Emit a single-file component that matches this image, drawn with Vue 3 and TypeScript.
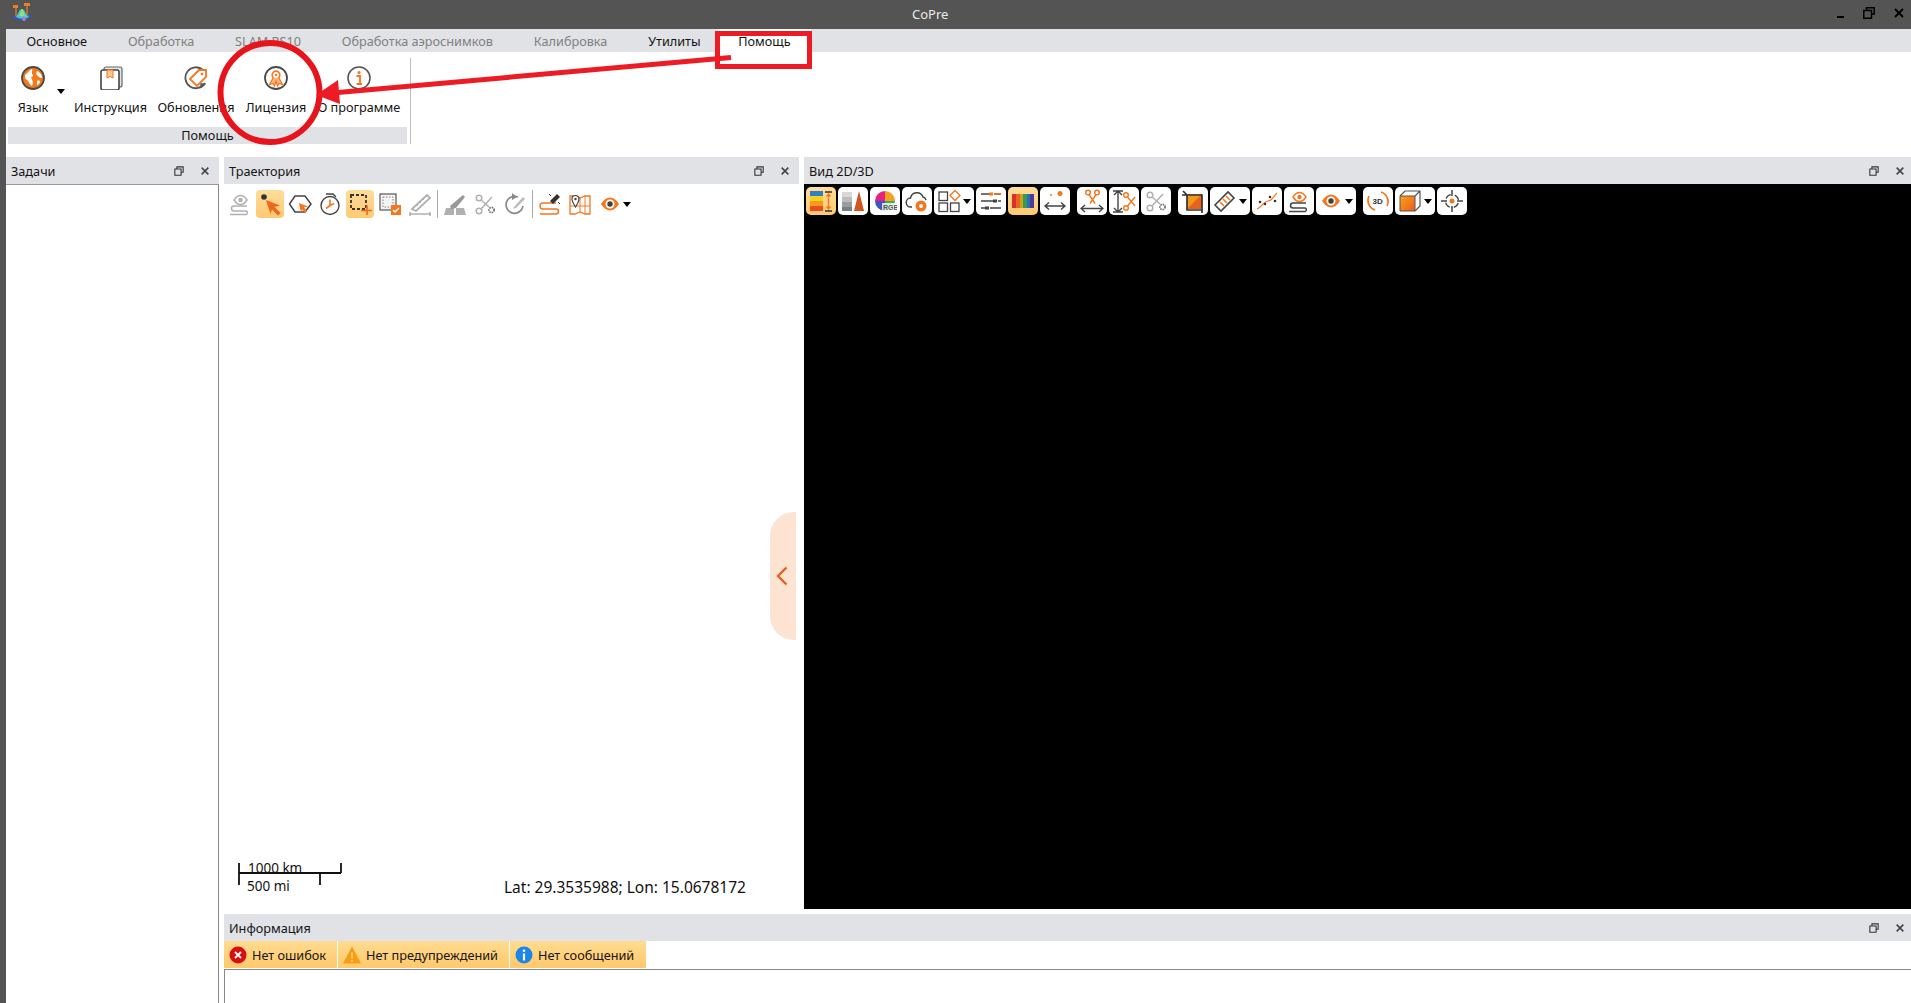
<script setup lang="ts">
const O = '#f4761d'
const D = '#444'
const G = '#b0b0b0'
const eyeSnake = (c: string, e: string) =>
  `<path d="M6 8c2-3 4-4.500 6.500-4.500S17 5 19 8c-2 3-4 4.500-6.500 4.500S8 11 6 8z" fill="none" stroke="${e}" stroke-width="1.500"/><circle cx="12.500" cy="8" r="2.200" fill="${e}"/><path d="M19 14H6a2.500 2.500 0 0 0 0 5h12a1.800 1.800 0 0 1 0 3.500H2" fill="none" stroke="${c}" stroke-width="1.500"/>`
const scissorsGear = (c: string) =>
  `<circle cx="6" cy="6" r="2.800" fill="none" stroke="${c}" stroke-width="1.500"/><circle cx="6" cy="19" r="2.800" fill="none" stroke="${c}" stroke-width="1.500"/><path d="M8 8l8 7M8 17L19 5" stroke="${c}" stroke-width="1.500" fill="none"/><circle cx="18.500" cy="18" r="2.600" fill="none" stroke="#777" stroke-width="1.800" stroke-dasharray="1.600 .8"/>`
const eye = `<path d="M3 12c3-4.500 6-6.500 9-6.500s6 2 9 6.500c-3 4.500-6 6.500-9 6.500S6 16.500 3 12z" fill="${O}"/><circle cx="12" cy="12" r="4.500" fill="#fff"/><circle cx="12" cy="12" r="2.700" fill="#4a3a30"/>`

const traj: { svg: string; on?: boolean; sepBefore?: boolean; caret?: boolean }[] = [
  { svg: eyeSnake(G, G) },
  { on: true, svg: `<circle cx="6" cy="5" r="2.800" fill="#333"/><path d="M8 8l14 5.500-5.500 1.500 6 6-2.500 2.500-6-6L12.500 22z" fill="#f0661a"/>` },
  { svg: `<path d="M7 4h10l6 8-6 8H7L1.500 12z" fill="none" stroke="${D}" stroke-width="1.500"/><path d="M11 11l9 3.500-4 1 3 3.500-2 2-3-3.500-1 3.500z" fill="${O}"/>` },
  { svg: `<circle cx="12" cy="13.500" r="9" fill="none" stroke="${D}" stroke-width="1.400"/><path d="M12 7.500v6l-4 3M12 13.500l4-2" stroke="${O}" stroke-width="1.600" fill="none"/><path d="M8 2h7l3 3" stroke="${D}" stroke-width="1.400" fill="none"/>` },
  { on: true, svg: `<path d="M3 3h15v14H3z" fill="none" stroke="#333" stroke-width="1.800" stroke-dasharray="3 2"/><path d="M19 13v10M13 18.500h11" stroke="#f0661a" stroke-width="1.500"/>` },
  { svg: `<rect x="2" y="2" width="16" height="16" fill="#f3f3f3" stroke="#555" stroke-width="1.200"/><rect x="5" y="5" width="10" height="10" fill="none" stroke="#888" stroke-dasharray="1.500 1.500"/><rect x="13" y="13" width="10" height="10" fill="${O}"/><path d="M15 18l2 2 4-4" stroke="#fff" stroke-width="1.300" fill="none"/>` },
  { svg: `<path d="M4 17L19 3l3 3L8 19z" fill="none" stroke="${G}" stroke-width="1.800"/><path d="M10 14l-2-2M13 11l-2-2M16 8l-2-2" stroke="${G}"/><path d="M1 22h22M2 20v4M22 20v4" stroke="${G}" stroke-width="1.500"/>` },
  { sepBefore: true, svg: `<path d="M1 23l2-7h8v7zM13 23v-7h8l2 7z" fill="${G}"/><path d="M7 14L20 3l2 2-9 11-5 1z" fill="#999"/>` },
  { svg: scissorsGear(G) },
  { svg: `<path d="M20 14a8.500 8.500 0 1 1-5-9" fill="none" stroke="#888" stroke-width="1.700"/><path d="M11 15l9-10 2 2-9 9-3 1z" fill="#bbb"/><path d="M9 1l5 4-5 3z" fill="#888"/>` },
  { sepBefore: true, svg: `<path d="M18 8H5a2.500 2.500 0 0 0 0 6h13a2.500 2.500 0 0 1 0 5H2" transform="translate(0 3)" fill="none" stroke="${O}" stroke-width="1.500"/><path d="M12 9l7-7 3 3-7 7z" fill="#333"/><path d="M11 2l2 2M20 10l2 2" stroke="#333"/>` },
  { svg: `<path d="M2 4h6l4 2 5-2h5v18h-5l-5-2-5 2H2z" fill="#fff" stroke="${O}" stroke-width="1.300"/><path d="M2 14h20M12 6v14M17 4v18" stroke="${O}" stroke-width="1"/><path d="M7.500 15C5 11 4 9.500 4 7a3.500 3.500 0 0 1 7 0c0 2.500-1 4-3.500 8z" fill="#fff" stroke="#444" stroke-width="1.200"/><circle cx="7.500" cy="7" r="1.200" fill="#444"/>` },
  { caret: true, svg: eye },
]

const view: { svg: string; on?: boolean; caret?: boolean; gap?: boolean }[] = [
  { on: true, svg: `<rect x="1" y="2" width="13" height="5" fill="#2f80c8"/><rect x="1" y="7" width="13" height="5" fill="#f4d31f"/><rect x="1" y="12" width="13" height="5" fill="#f59a1f"/><rect x="1" y="17" width="13" height="5" fill="#ec4a1f"/><path d="M16 3h7M16 22h7" stroke="#333" stroke-width="1.500"/><path d="M19.500 5v15M17.500 7.500l2-2.500 2 2.500M17.500 17.500l2 2.500 2-2.500" stroke="${O}" stroke-width="1.300" fill="none"/>` },
  { svg: `<rect x="1" y="3" width="10" height="5" fill="#d8d8d8"/><rect x="1" y="8" width="10" height="5" fill="#bdbdbd"/><rect x="1" y="13" width="10" height="5" fill="#9c9c9c"/><rect x="1" y="18" width="10" height="4" fill="#7d7d7d"/><path d="M18 2l5 20H13z" fill="#d1551f"/>` },
  { svg: `<path d="M12 2a10 10 0 0 1 10 10H12z" fill="#f4a11d"/><path d="M12 2a10 10 0 0 0-10 10h10z" fill="#e8217f"/><path d="M2 12a10 10 0 0 0 10 10V12z" fill="#3a57c6"/><path d="M12 12h10a10 10 0 0 1-10 10z" fill="#3fae5a"/><rect x="9" y="14" width="15" height="8" fill="#fff" opacity=".8"/><text x="10" y="21" font-family="Liberation Sans" font-size="7" font-weight="700" fill="#555">RGB</text>` },
  { svg: `<path d="M7 18H6a4.500 4.500 0 0 1-.500-9A6.500 6.500 0 0 1 18 8a4 4 0 0 1 3 3" fill="none" stroke="${D}" stroke-width="1.500"/><circle cx="16" cy="17" r="5.500" fill="${O}"/><circle cx="16" cy="17" r="2" fill="#fff"/>` },
  { caret: true, svg: `<rect x="2" y="3" width="8.500" height="8.500" fill="none" stroke="${D}" stroke-width="1.300"/><rect x="2" y="14" width="8.500" height="8.500" fill="none" stroke="${D}" stroke-width="1.300"/><rect x="13.500" y="14" width="8.500" height="8.500" fill="none" stroke="${D}" stroke-width="1.300"/><path d="M18 1.500l5 5-5 5-5-5z" fill="none" stroke="${O}" stroke-width="1.300"/>` },
  { svg: `<path d="M2 5h8M15 5h7M2 12h12M19 12h3M2 19h4M11 19h11" stroke="${D}" stroke-width="1.500"/><rect x="10" y="3.500" width="4" height="3" fill="${O}"/><rect x="14" y="10.500" width="4" height="3" fill="${D}"/><rect x="6" y="17.500" width="4" height="3" fill="${D}"/><path d="M15 5h7" stroke="${O}" stroke-width="1.500"/>` },
  { on: true, svg: `<rect x="1" y="5" width="4" height="14" fill="#d8302a"/><rect x="5" y="5" width="4" height="14" fill="#e8651f"/><rect x="9" y="5" width="3" height="14" fill="#c9a21c"/><rect x="12" y="5" width="4" height="14" fill="#3a9a55"/><rect x="16" y="5" width="3" height="14" fill="#2a6fb8"/><rect x="19" y="5" width="4" height="14" fill="#4a3aa0"/>` },
  { svg: `<circle cx="8" cy="6" r="1" fill="${O}"/><circle cx="17" cy="4.500" r="2.500" fill="${O}"/><path d="M2 17h20M6 13.500L2 17l4 3.500M18 13.500l4 3.500-4 3.500" stroke="${D}" stroke-width="1.400" fill="none"/>` },
  { gap: true, svg: `<circle cx="8" cy="3.500" r="2.300" fill="none" stroke="${O}" stroke-width="1.400"/><circle cx="17" cy="3.500" r="2.300" fill="none" stroke="${O}" stroke-width="1.400"/><path d="M9 5.500l6 9M16 5.500l-6 9" stroke="${O}" stroke-width="1.400"/><path d="M1 19.500h22M5 16l-4 3.500L5 23M19 16l4 3.500-4 3.500" stroke="${D}" stroke-width="1.400" fill="none"/>` },
  { svg: `<path d="M6 2v21M2 6l4-4 4 4M2 19l4 4 4-4M1 2h10M1 23h10" stroke="${D}" stroke-width="1.400" fill="none"/><circle cx="14" cy="6" r="2.300" fill="none" stroke="${O}" stroke-width="1.400"/><circle cx="14" cy="19" r="2.300" fill="none" stroke="${O}" stroke-width="1.400"/><path d="M15.500 8L23 17M15.500 17L23 8" stroke="${O}" stroke-width="1.400"/>` },
  { svg: scissorsGear(G) },
  { gap: true, svg: `<path d="M6 5h15v15H6z" fill="#e8641e"/><path d="M6 5h15L6 20z" fill="#f4971d"/><path d="M2 2l4 4v15h15M1 6h20v15M21 21v3" fill="none" stroke="#333" stroke-width="1.700"/>` },
  { caret: true, svg: `<path d="M2 16L15 3l6 6L8 22z" fill="#fff" stroke="#444" stroke-width="1.600"/><path d="M7 13l4 4M10 10l4 4M13 7l4 4" stroke="${O}" stroke-width="1.600"/>` },
  { svg: `<path d="M2 20c5-2 7-8 11-8s5-4 9-8" fill="none" stroke="${O}" stroke-width="1.200"/><circle cx="5" cy="13" r="1.300" fill="#333"/><circle cx="10" cy="15" r="1.300" fill="#333"/><circle cx="15" cy="8" r="1.300" fill="#333"/><circle cx="20" cy="12" r="1.300" fill="#333"/>` },
  { svg: eyeSnake(D, O) },
  { caret: true, svg: eye },
  { gap: true, svg: `<text x="6.500" y="15" font-family="Liberation Sans" font-size="8" font-weight="700" fill="#333">3D</text><path d="M15 3a10 10 0 0 1 6 14" fill="none" stroke="${O}" stroke-width="1.600"/><path d="M9 21a10 10 0 0 1-6-14" fill="none" stroke="${O}" stroke-width="1.600"/>` },
  { caret: true, svg: `<defs><linearGradient id="cg" x1="0" y1="0" x2="1" y2="1"><stop offset="0" stop-color="#fca31c"/><stop offset="1" stop-color="#ea5d18"/></linearGradient></defs><path d="M2 7h15v15H2z" fill="url(#cg)" stroke="#555"/><path d="M2 7l5-5h15v15l-5 5M17 7l5-5" fill="none" stroke="#555" stroke-width="1.200"/>` },
  { svg: `<circle cx="12" cy="12" r="6.500" fill="none" stroke="${D}" stroke-width="1.300" stroke-dasharray="6 4.200" stroke-dashoffset="-2.100"/><circle cx="12" cy="12" r="2.500" fill="${O}"/><path d="M12 1v6M12 17v6M1 12h6M17 12h6" stroke="${D}" stroke-width="1.500"/>` },
]

const ribbon = [
  { label: 'Язык', cls: 'lang', svg: `<circle cx="12" cy="12" r="11" fill="#f47a1c" stroke="#4a4a4a" stroke-width="1.800"/><path d="M4 9c3-2 4-5 7-6 1 2-1 3 0 5 2 1 1 3-1 3 1 3 3 5 1 9-3-2-3-5-5-6-2-1-2-3-2-5zM16 5c3 1 5 4 5 7-2 0-3-1-4-2-2-1-2-3-1-5zM16 15c2-1 3 0 3 1-1 2-2 3-3 3z" fill="#fff"/>` },
  { label: 'Инструкция', cls: 'doc', svg: `<rect x="5" y="1" width="18" height="20" rx="2" fill="#e6e6e6" stroke="#666" stroke-width="1.200"/><rect x="2" y="4" width="18" height="20" rx="2" fill="#fff" stroke="#444" stroke-width="1.600"/><path d="M8 4h6v8l-3-1.500L8 12z" fill="#fbc78e" stroke="${O}"/>` },
  { label: 'Обновления', cls: 'upd', svg: `<path d="M21 17A10.500 10.500 0 1 1 19 4" fill="none" stroke="#555" stroke-width="1.800"/><path d="M17 22l5-4-6-1z" fill="#555"/><path d="M6 13L15 4h7v7l-9 9z" fill="#fff" stroke="${O}" stroke-width="1.800"/><circle cx="18" cy="8" r="1.300" fill="${O}"/>` },
  { label: 'Лицензия', cls: 'lic', svg: `<circle cx="12" cy="12" r="11" fill="#fff" stroke="#4a4a4a" stroke-width="1.800"/><circle cx="12" cy="9" r="3.800" fill="none" stroke="${O}" stroke-width="1.700"/><circle cx="12" cy="9" r="1.200" fill="${O}"/><path d="M9 12l-3.500 6.500 3.500-1 1.500 2.500L12 15l1.500 5 1.500-2.500 3.500 1L15 12" fill="#fbb57b" stroke="${O}" stroke-width="1.200"/>` },
  { label: 'О программе', cls: 'about', svg: `<circle cx="12" cy="12" r="11" fill="#fff" stroke="#555" stroke-width="1.600"/><circle cx="12" cy="6.500" r="1.500" fill="${O}"/><path d="M9.500 10h3.500v8h2M9.500 18H15" fill="none" stroke="${O}" stroke-width="1.800"/>` },
]

const tabs = [
  { label: 'Основное' },
  { label: 'Обработка', off: true },
  { label: 'SLAM RS10', off: true },
  { label: 'Обработка аэроснимков', off: true },
  { label: 'Калибровка', off: true },
  { label: 'Утилиты' },
  { label: 'Помощь', active: true },
]
</script>

<template>
  <div class="app">
    <header class="title">
      <svg class="logo" viewBox="0 0 22 20" width="22" height="20">
        <path d="M1 15l9-4 11 3-9 5z" fill="#2f55e8" />
        <path d="M5 15c2-2 3-8 6-8s3 5 7 8c-4 2-9 2-13 0z" fill="#4cc9c0" />
        <path d="M8 14c1-2 2-7 3-7s2 4 3 7z" fill="#8fe07a" />
        <circle cx="13" cy="17" r="2" fill="#b56fe0" />
        <path d="M5 5v9M16 4v9" stroke="#e8802a" stroke-width="1.200" />
        <rect x="2" y="3" width="5" height="3" fill="#e8802a" />
        <rect x="13" y="1" width="6" height="3" fill="#e8802a" />
      </svg>
      <span class="title-text">CoPre</span>
      <div class="win-btns">
        <i class="min"></i>
        <svg viewBox="0 0 12 12" width="12" height="12"><path d="M3.500 3V.8h7.700V7H9M.8 3.500h7.700v7.700H.8z" fill="none" stroke="#000" stroke-width="1.500" /></svg>
        <svg viewBox="0 0 12 12" width="12" height="12"><path d="M2 2l8 8M10 2l-8 8" stroke="#000" stroke-width="1.900" /></svg>
      </div>
    </header>

    <div class="main">
      <nav class="tabs">
        <span v-for="t in tabs" :key="t.label" class="tab" :class="{ off: t.off, active: t.active }">{{ t.label }}</span>
      </nav>

      <section class="ribbon">
        <div class="group">
          <div class="group-btns">
            <div v-for="b in ribbon" :key="b.label" class="rbtn" :class="b.cls">
              <svg viewBox="0 0 24 24" width="24" height="24" v-html="b.svg"></svg>
              <span>{{ b.label }}</span>
              <i v-if="b.cls === 'lang'" class="caret lang-caret"></i>
            </div>
          </div>
          <div class="group-label">Помощь</div>
        </div>
        <div class="group-sep"></div>
      </section>

      <div class="workspace">
        <aside class="panel tasks">
          <div class="phead">
            <span>Задачи</span>
            <svg class="pbtn first" viewBox="0 0 12 12" width="10" height="10"><path d="M3.500 3V1h7.500v6.500H9M1 3.500h7.500V11H1z" fill="none" stroke="#333" stroke-width="1.300" /></svg>
            <svg class="pbtn" viewBox="0 0 12 12" width="10" height="10"><path d="M2 2l8 8M10 2l-8 8" stroke="#444" stroke-width="1.900" /></svg>
          </div>
          <div class="tasks-body"></div>
        </aside>

        <div class="right">
          <div class="top">
            <section class="panel traj">
              <div class="phead">
                <span>Траектория</span>
                <svg class="pbtn first" viewBox="0 0 12 12" width="10" height="10"><path d="M3.500 3V1h7.500v6.500H9M1 3.500h7.500V11H1z" fill="none" stroke="#333" stroke-width="1.300" /></svg>
                <svg class="pbtn" viewBox="0 0 12 12" width="10" height="10"><path d="M2 2l8 8M10 2l-8 8" stroke="#444" stroke-width="1.900" /></svg>
              </div>
              <div class="map">
                <div class="ttool">
                  <template v-for="(b, i) in traj" :key="i">
                    <i v-if="b.sepBefore" class="tsep"></i>
                    <div class="tbtn" :class="{ on: b.on, wide: b.caret }">
                      <svg viewBox="0 0 24 24" width="24" height="24" v-html="b.svg"></svg>
                      <i v-if="b.caret" class="caret"></i>
                    </div>
                  </template>
                </div>
                <svg class="scale" viewBox="0 0 104 24" width="104" height="24">
                  <path d="M1 0v22M1 10h102M103 0v10M82 10v12" stroke="#111" stroke-width="1.800" fill="none" />
                </svg>
                <span class="scale-label km">1000 km</span>
                <span class="scale-label mi">500 mi</span>
                <div class="coords">Lat: 29.3535988; Lon: 15.0678172</div>
                <div class="handle">
                  <svg viewBox="0 0 12 20" width="12" height="20"><path d="M10.500 1.500L2 10l8.500 8.500" fill="none" stroke="#f05a14" stroke-width="2.300" /></svg>
                </div>
              </div>
            </section>

            <section class="panel vw edge">
              <div class="phead">
                <span>Вид 2D/3D</span>
                <svg class="pbtn first" viewBox="0 0 12 12" width="10" height="10"><path d="M3.500 3V1h7.500v6.500H9M1 3.500h7.500V11H1z" fill="none" stroke="#333" stroke-width="1.300" /></svg>
                <svg class="pbtn" viewBox="0 0 12 12" width="10" height="10"><path d="M2 2l8 8M10 2l-8 8" stroke="#444" stroke-width="1.900" /></svg>
              </div>
              <div class="canvas">
                <div class="vtool">
                  <div v-for="(b, i) in view" :key="i" class="vbtn" :class="{ on: b.on, wide: b.caret, gap: b.gap }">
                    <svg viewBox="0 0 24 24" width="24" height="24" v-html="b.svg"></svg>
                    <i v-if="b.caret" class="caret"></i>
                  </div>
                </div>
              </div>
            </section>
          </div>

          <section class="panel info edge">
            <div class="phead">
              <span>Информация</span>
              <svg class="pbtn first" viewBox="0 0 12 12" width="10" height="10"><path d="M3.500 3V1h7.500v6.500H9M1 3.500h7.500V11H1z" fill="none" stroke="#333" stroke-width="1.300" /></svg>
              <svg class="pbtn" viewBox="0 0 12 12" width="10" height="10"><path d="M2 2l8 8M10 2l-8 8" stroke="#444" stroke-width="1.900" /></svg>
            </div>
            <div class="msgbar">
              <div class="msg m1">
                <svg viewBox="0 0 18 18" width="18" height="18"><circle cx="9" cy="9" r="8.500" fill="#d90f0f" /><path d="M6 6l6 6M12 6l-6 6" stroke="#fff" stroke-width="1.800" /></svg>
                <span>Нет ошибок</span>
              </div>
              <div class="msg m2">
                <svg viewBox="0 0 18 18" width="18" height="18"><path d="M9 .5L18 17.500H0z" fill="#f99c0d" /><path d="M9 6.500v6" stroke="#fdd28a" stroke-width="1.800" /><circle cx="9" cy="15" r="1" fill="#fdd28a" /></svg>
                <span>Нет предупреждений</span>
              </div>
              <div class="msg m3">
                <svg viewBox="0 0 18 18" width="18" height="18"><circle cx="9" cy="9" r="8.500" fill="#1b86e6" /><circle cx="9" cy="4.700" r="1.300" fill="#fff" /><path d="M9 7.500v7" stroke="#fff" stroke-width="2.200" /></svg>
                <span>Нет сообщений</span>
              </div>
            </div>
            <div class="msgbox"></div>
          </section>
        </div>
      </div>
    </div>

    <svg class="annot" viewBox="0 0 1911 1003" width="1911" height="1003">
      <ellipse cx="270" cy="92.500" rx="49.500" ry="49.500" fill="none" stroke="#e8141c" stroke-width="6" />
      <rect x="717.500" y="33.500" width="92" height="33" fill="none" stroke="#ed1c24" stroke-width="5" />
      <path d="M731 57.500L338 92.500" stroke="#ed1c24" stroke-width="5" fill="none" />
      <path d="M316 95L338 80 340 104z" fill="#ed1c24" />
    </svg>
  </div>
</template>

<style>
html, body { margin: 0; padding: 0; background: #545454; }
</style>

<style scoped>
.app {
  position: relative;
  width: 1911px;
  height: 1003px;
  overflow: hidden;
  display: flex;
  flex-direction: column;
  background: #545454;
  font-family: "Noto Sans", "Open Sans", sans-serif;
  font-size: 12.7px;
  color: #141414;
}
.title {
  position: relative;
  flex: 0 0 29px;
  display: flex;
  align-items: center;
  padding-left: 11px;
  padding-right: 6px;
  color: #eaeaea;
}
.logo { flex: none; margin-top: -5px; }
.title-text {
  position: absolute;
  left: 912px;
  top: 5px;
  font-size: 13px;
}
.win-btns {
  margin-left: auto;
  display: flex;
  align-items: center;
  gap: 18px;
  margin-top: -3px;
}
.min {
  display: block;
  width: 7px;
  height: 2px;
  margin-top: 7px;
  margin-right: 1px;
  background: #000;
}
.main {
  flex: 1;
  margin-left: 6px;
  min-height: 0;
  background: #fff;
  display: flex;
  flex-direction: column;
}
.tabs {
  flex: 0 0 23px;
  display: flex;
  background: #e1e2e6;
}
.tab {
  padding: 1px 20.400px 0;
  line-height: 22px;
  white-space: nowrap;
}
.tab:nth-child(6) { padding-right: 17.500px; }
.tab.off { color: #808080; }
.tab.active { background: #fff; padding: 2px 20px 0; line-height: 21px; }
.ribbon {
  flex: 0 0 105px;
  display: flex;
  padding: 6px 0 13px 2px;
  box-sizing: border-box;
}
.group {
  width: 399px;
  display: flex;
  flex-direction: column;
}
.group-btns {
  flex: 1;
  display: flex;
}
.rbtn {
  position: relative;
  display: flex;
  flex-direction: column;
  align-items: center;
  padding-top: 8px;
  box-sizing: border-box;
  gap: 8px;
  white-space: nowrap;
}
.rbtn span { line-height: 18px; }
.lang { width: 62px; padding-right: 12px; }
.doc { width: 81px; }
.upd { width: 90px; }
.lic { width: 70px; }
.about { width: 96px; }
.lang-caret { position: absolute; left: 49px; top: 31px; }
.group-label {
  flex: 0 0 17px;
  background: #e1e2e6;
  text-align: center;
  line-height: 16px;
}
.group-sep {
  width: 1px;
  margin-left: 3px;
  background: #bdbdbd;
}
.caret {
  display: block;
  width: 0;
  height: 0;
  border-left: 4.500px solid transparent;
  border-right: 4.500px solid transparent;
  border-top: 5px solid #000;
  flex: none;
}
.workspace {
  flex: 1;
  min-height: 0;
  display: flex;
}
.panel {
  display: flex;
  flex-direction: column;
}
.phead {
  flex: 0 0 27px;
  display: flex;
  align-items: center;
  padding-left: 5px;
  background: #e1e2e6;
}
.pbtn { flex: none; margin-right: 9px; }
.pbtn.first { margin-left: auto; margin-right: 16px; }
.edge .pbtn { margin-right: 6px; }
.edge .pbtn.first { margin-right: 16px; }
.tasks { width: 213px; flex: none; }
.tasks-body {
  flex: 1;
  border-top: 1px solid #999;
  border-right: 1px solid #888;
}
.right {
  flex: 1;
  min-width: 0;
  margin-left: 5px;
  display: flex;
  flex-direction: column;
  gap: 5px;
}
.top {
  flex: 0 0 752px;
  display: flex;
  gap: 5px;
}
.traj { width: 575px; flex: none; }
.map {
  position: relative;
  flex: 1;
  background: #fff;
}
.ttool {
  display: flex;
  gap: 2px;
  padding: 6px 0 0 2px;
}
.tbtn {
  width: 28px;
  height: 28px;
  border-radius: 4px;
  display: flex;
  align-items: center;
  justify-content: center;
  flex: none;
}
.tbtn.wide { width: 42px; gap: 1px; justify-content: flex-start; padding-left: 2px; box-sizing: border-box; }
.tbtn.on { background: linear-gradient(#ffdc9c, #ffc970); }
.tsep {
  display: block;
  width: 1px;
  height: 28px;
  margin: 0 1px;
  background: #aaa;
}
.scale { position: absolute; left: 14px; top: 679px; overflow: visible; }
.scale-label {
  position: absolute;
  font-size: 13.500px;
  line-height: 18px;
  color: #111;
  white-space: nowrap;
}
.km { left: 24px; top: 675px; }
.mi { left: 23px; top: 693px; }
.coords {
  position: absolute;
  left: 280px;
  top: 692px;
  font-size: 15.500px;
  line-height: 22px;
  color: #111;
  white-space: nowrap;
}
.handle {
  position: absolute;
  left: 546px;
  top: 328px;
  width: 26px;
  height: 128px;
  background: #fde3d2;
  border-radius: 24px 0 0 24px;
  display: flex;
  align-items: center;
  justify-content: flex-start;
  padding-left: 6px;
  box-sizing: border-box;
}
.vw { flex: 1; min-width: 0; }
.canvas { flex: 1; background: #000; }
.vtool {
  display: flex;
  gap: 2px;
  padding: 3px 0 0 2px;
}
.vbtn {
  width: 30px;
  height: 28px;
  border-radius: 5px;
  background: #fff;
  display: flex;
  align-items: center;
  justify-content: center;
  flex: none;
}
.vbtn.on { background: linear-gradient(#ffdc9c, #ffc970); }
.vbtn.wide { width: 40px; gap: 2px; }
.vbtn.gap { margin-left: 5px; }
.info { flex: 1; min-height: 0; }
.msgbar {
  flex: 0 0 27px;
  display: flex;
}
.msg {
  display: flex;
  align-items: center;
  gap: 5px;
  background: linear-gradient(#ffdb90, #ffc96c);
  box-sizing: border-box;
  padding-left: 5px;
  margin-right: 1px;
  white-space: nowrap;
}
.m1 { width: 113px; }
.m2 { width: 171px; }
.m3 { width: 136px; }
.msgbox {
  flex: 1;
  margin-top: 1px;
  border: 1px solid #888;
  border-right: none;
  border-bottom: none;
}
.annot {
  position: absolute;
  left: 0;
  top: 0;
  pointer-events: none;
}
</style>
